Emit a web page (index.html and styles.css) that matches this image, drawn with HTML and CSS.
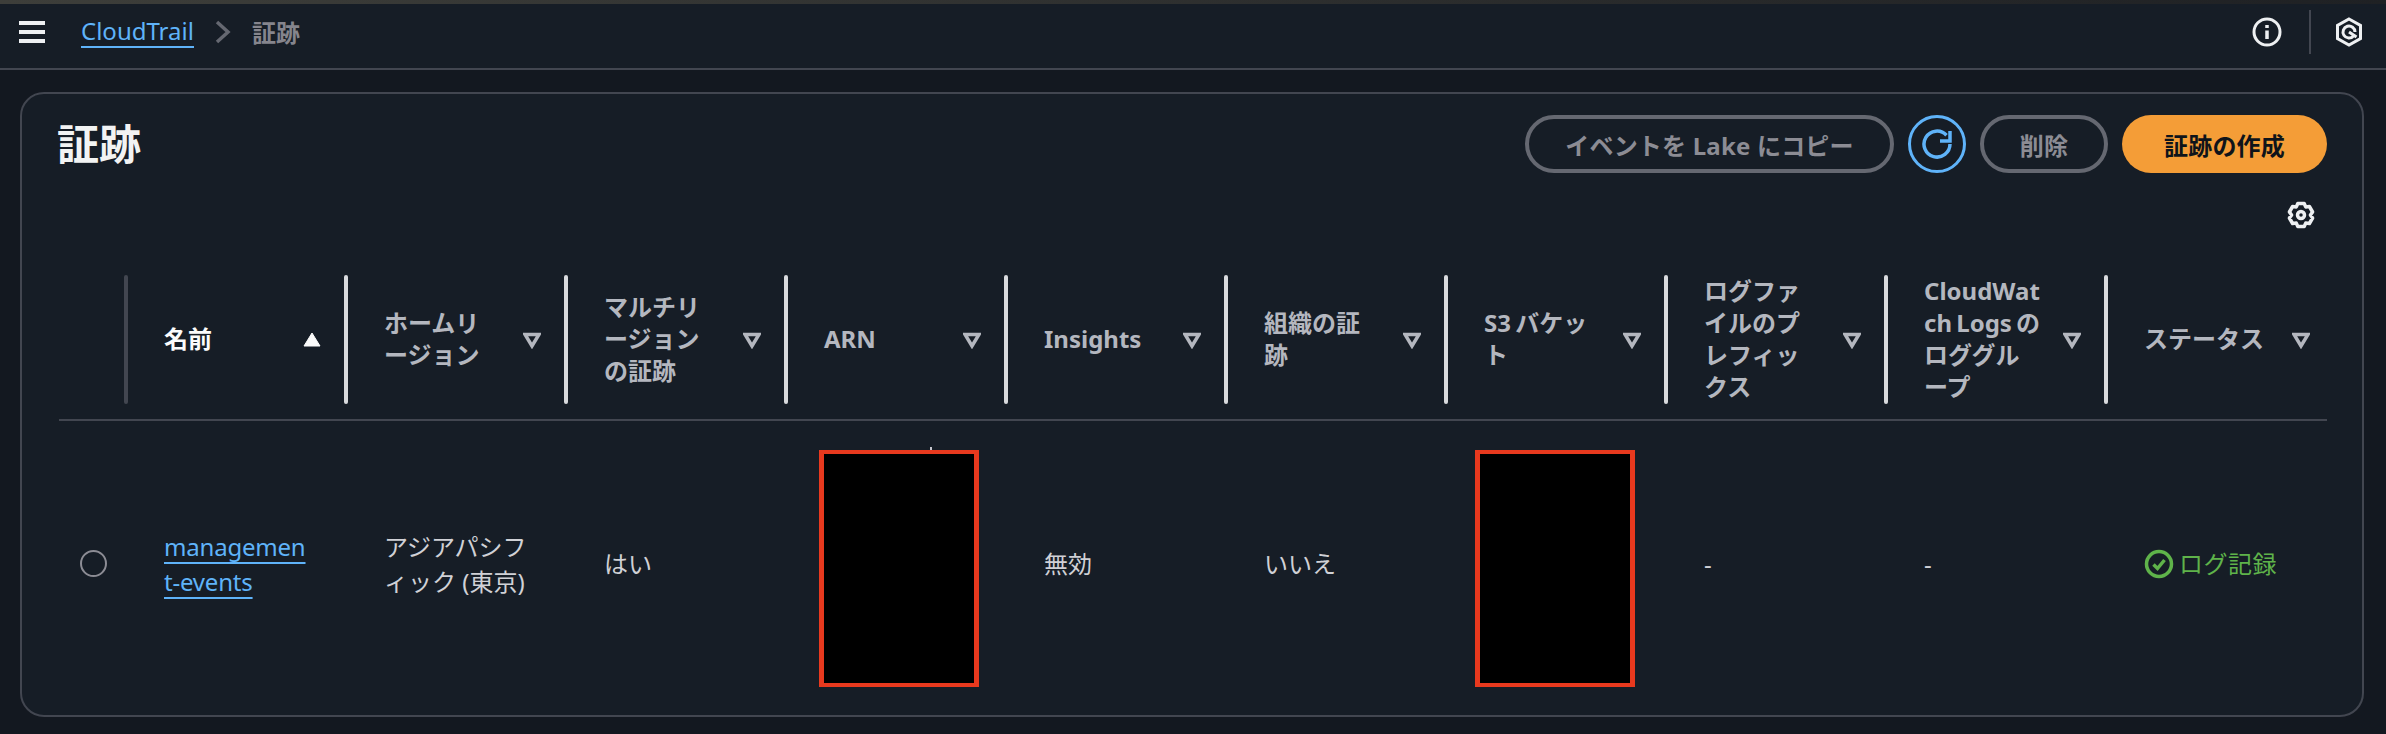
FILE: index.html
```html
<!DOCTYPE html>
<html lang="ja">
<head>
  <meta charset="UTF-8" />
  <title>証跡 | CloudTrail</title>
  <link rel="stylesheet" href="styles.css">
</head>
<body>

  <div class="window-edge"></div>

  <!-- Top navigation -->
  <nav class="topnav">
    <div class="menu-icon"><span></span><span></span><span></span></div>
    <a class="crumb-link" href="#">CloudTrail</a>
    <svg class="crumb-sep" viewBox="0 0 16 24"><path d="M2 2l11 10L2 22"/></svg>
    <span class="crumb-current">証跡</span>
    <div class="nav-tools">
      <svg class="nav-icon" viewBox="0 0 30 30">
        <circle cx="15" cy="15" r="13"/>
        <path class="thick" d="M15 13.500V22M15 8v3"/>
      </svg>
      <div class="nav-divider"></div>
      <svg class="nav-icon" viewBox="0 0 30 30">
        <path d="M15 2l11.500 6.500v13L15 28 3.500 21.500v-13z"/>
        <path d="M19.500 19a6 6 0 1 1 1.500-4M15 15l7.500 5"/>
      </svg>
    </div>
  </nav>

  <main class="content">
    <section class="card">

      <header class="card-head">
        <h1 class="card-title">証跡</h1>
        <div class="actions">
          <button class="btn btn-disabled btn-copy">イベントを Lake にコピー</button>
          <button class="btn-refresh">
            <svg viewBox="0 0 32 32">
              <path d="M19 13h10V3"/>
              <path d="M29 16a13 13 0 1 1-3.500-8.800"/>
            </svg>
          </button>
          <button class="btn btn-disabled btn-delete">削除</button>
          <button class="btn btn-primary">証跡の作成</button>
        </div>
      </header>

      <div class="prefs">
        <svg class="gear" viewBox="0 0 30 30">
          <path d="M11.800 3.500h6.400l1.500 3.400 3.700-.4 3.200 5.500-2.200 3 2.200 3-3.200 5.500-3.700-.4-1.500 3.400h-6.400l-1.500-3.400-3.700.4-3.200-5.500 2.200-3-2.200-3 3.200-5.500 3.700.4z"/>
          <circle cx="15" cy="15" r="3.500"/>
        </svg>
      </div>

      <div class="table">
        <!-- Header row -->
        <div class="th-empty"></div>
        <div class="th th-first th-sorted">
          <span class="th-label">名前</span>
          <svg class="caret" viewBox="0 0 18 18"><path class="caret-up" d="M9 2l8 13H1z"/></svg>
        </div>
        <div class="th">
          <span class="th-label">ホームリージョン</span>
          <svg class="caret" viewBox="0 0 18 18"><path d="M2 3.500h14L9 15z"/></svg>
        </div>
        <div class="th">
          <span class="th-label">マルチリージョンの証跡</span>
          <svg class="caret" viewBox="0 0 18 18"><path d="M2 3.500h14L9 15z"/></svg>
        </div>
        <div class="th">
          <span class="th-label">ARN</span>
          <svg class="caret" viewBox="0 0 18 18"><path d="M2 3.500h14L9 15z"/></svg>
        </div>
        <div class="th">
          <span class="th-label">Insights</span>
          <svg class="caret" viewBox="0 0 18 18"><path d="M2 3.500h14L9 15z"/></svg>
        </div>
        <div class="th">
          <span class="th-label">組織の証跡</span>
          <svg class="caret" viewBox="0 0 18 18"><path d="M2 3.500h14L9 15z"/></svg>
        </div>
        <div class="th">
          <span class="th-label">S3 バケット</span>
          <svg class="caret" viewBox="0 0 18 18"><path d="M2 3.500h14L9 15z"/></svg>
        </div>
        <div class="th">
          <span class="th-label">ログファイルのプレフィックス</span>
          <svg class="caret" viewBox="0 0 18 18"><path d="M2 3.500h14L9 15z"/></svg>
        </div>
        <div class="th">
          <span class="th-label">CloudWatch Logs のロググループ</span>
          <svg class="caret" viewBox="0 0 18 18"><path d="M2 3.500h14L9 15z"/></svg>
        </div>
        <div class="th th-last">
          <span class="th-label">ステータス</span>
          <svg class="caret" viewBox="0 0 18 18"><path d="M2 3.500h14L9 15z"/></svg>
        </div>

        <!-- Data row -->
        <div class="td td-radio"><span class="radio"></span></div>
        <div class="td"><a class="name-link" href="#">management-events</a></div>
        <div class="td"><span class="td-text">アジアパシフィック (東京)</span></div>
        <div class="td"><span class="td-text">はい</span></div>
        <div class="td td-arn"><div class="redacted"></div></div>
        <div class="td"><span class="td-text">無効</span></div>
        <div class="td"><span class="td-text">いいえ</span></div>
        <div class="td td-s3"><div class="redacted"></div></div>
        <div class="td"><span class="td-text">-</span></div>
        <div class="td"><span class="td-text">-</span></div>
        <div class="td">
          <span class="status">
            <svg class="status-icon" viewBox="0 0 30 30">
              <circle cx="15" cy="15" r="12.500"/>
              <path d="M9.500 15.500l4 4 7-8.500"/>
            </svg>
            ログ記録
          </span>
        </div>
      </div>

    </section>
  </main>

</body>
</html>
```

FILE: styles.css
```css
* {
  box-sizing: border-box;
}

body {
  margin: 0;
  height: 734px;
  overflow: hidden;
  background: #131820;
  color: #d0d1d6;
  font-family: "Noto Sans", "Noto Sans CJK JP", sans-serif;
  font-size: 24px;
}

.window-edge {
  height: 4px;
  background: linear-gradient(to right, #3d3e3a, #1f2124);
}

/* Top navigation */
.topnav {
  height: 66px;
  display: flex;
  align-items: center;
  padding: 0 22px 8px 19px;
  background: #161d26;
  border-bottom: 2px solid #424650;
}

.menu-icon {
  width: 26px;
  height: 22px;
  display: flex;
  flex-direction: column;
  justify-content: space-between;
  margin-right: 36px;
}

.menu-icon span {
  height: 4px;
  background: #eef0f2;
}

.crumb-link {
  color: #5fb3f9;
  font-size: 24px;
  text-decoration: none;
  border-bottom: 2px solid #5fb3f9;
  line-height: 30px;
}

.crumb-sep {
  width: 16px;
  height: 24px;
  margin: 0 21px;
  fill: none;
  stroke: #656871;
  stroke-width: 3.500;
}

.crumb-current {
  margin-bottom: 2px;
  color: #85858d;
  font-weight: 700;
}

.nav-tools {
  margin-left: auto;
  display: flex;
  align-items: center;
}

.nav-icon {
  width: 30px;
  height: 30px;
  fill: none;
  stroke: #eef0f2;
  stroke-width: 3;
}

.nav-icon .thick {
  stroke-width: 3.500;
}

.nav-divider {
  width: 2px;
  height: 44px;
  margin: 0 23px 0 27px;
  background: #424650;
}

/* Card */
.content {
  padding: 22px 22px 0 20px;
}

.card {
  height: 625px;
  padding: 0 35px 0 37px;
  background: #161d26;
  border: 2px solid #424650;
  border-radius: 24px;
}

.card-head {
  display: flex;
  justify-content: space-between;
  padding-top: 21px;
}

.card-title {
  margin: 0 0 0 -2px;
  color: #f2f3f3;
  font-size: 42px;
  font-weight: 700;
  line-height: 58px;
}

.actions {
  display: flex;
  align-items: center;
  gap: 14px;
}

.btn {
  height: 58px;
  padding: 0;
  border-radius: 29px;
  font-family: inherit;
  font-size: 24px;
  font-weight: 700;
  letter-spacing: 0.2px;
}

.btn-disabled {
  background: transparent;
  border: 4px solid #656871;
  color: #8c8c94;
}

.btn-copy {
  width: 369px;
}

.btn-delete {
  width: 128px;
}

.btn-primary {
  width: 205px;
  background: #f49d37;
  border: none;
  color: #0f141a;
}

.btn-refresh {
  width: 58px;
  height: 58px;
  padding: 0;
  display: flex;
  align-items: center;
  justify-content: center;
  background: transparent;
  border: 3px solid #5fb3f9;
  border-radius: 50%;
}

.btn-refresh svg {
  width: 32px;
  height: 32px;
  fill: none;
  stroke: #5fb3f9;
  stroke-width: 3.500;
}

.prefs {
  display: flex;
  justify-content: flex-end;
  padding: 27px 11px 0 0;
}

.gear {
  width: 30px;
  height: 30px;
  fill: none;
  stroke: #eef0f2;
  stroke-width: 3.500;
  stroke-linejoin: round;
}

/* Table */
.table {
  display: grid;
  grid-template-columns: 65px repeat(9, 220px) 223px;
  margin-top: 45px;
}

.th-empty,
.th {
  height: 146px;
  border-bottom: 2px solid #424650;
}

.th {
  position: relative;
  display: flex;
  align-items: flex-start;
  justify-content: space-between;
  padding: 0 23px 0 40px;
}

.th::before {
  content: "";
  position: absolute;
  left: 0;
  top: 0;
  width: 4px;
  height: 129px;
  background: #d8dadd;
  border-radius: 2px;
}

.th-first::before {
  background: #424650;
}

.th-last {
  padding-right: 17px;
}

.th-label {
  width: 119px;
  height: 127px;
  display: flex;
  align-items: center;
  color: #b4b7bf;
  font-weight: 700;
  line-height: 32px;
  line-break: anywhere;
  overflow-wrap: anywhere;
  word-spacing: -2px;
}

.th-last .th-label {
  width: 130px;
}

.th-sorted .th-label {
  color: #fbfbfb;
}

.caret {
  flex: none;
  width: 18px;
  height: 18px;
  margin-top: 56px;
  fill: none;
  stroke: #b4b7bf;
  stroke-width: 3.500;
}

.caret .caret-up {
  fill: #fbfbfb;
  stroke: #fbfbfb;
  stroke-width: 1;
}

.td {
  height: 285px;
  display: flex;
  align-items: center;
  padding-left: 40px;
  line-height: 35px;
}

.td-radio {
  padding-left: 21px;
}

.radio {
  width: 27px;
  height: 27px;
  border: 2px solid #8c8c94;
  border-radius: 50%;
}

.name-link {
  width: 146px;
  color: #5fb3f9;
  letter-spacing: -0.2px;
  overflow-wrap: anywhere;
  text-decoration: underline;
  text-decoration-thickness: 2px;
  text-underline-offset: 6px;
}

.td-text {
  width: 146px;
  line-break: anywhere;
}

.td-arn {
  padding-left: 35px;
}

.td-s3 {
  padding-left: 31px;
}

.redacted {
  position: relative;
  width: 160px;
  height: 237px;
  margin-top: 9px;
  background: #000;
  border-style: solid;
  border-color: #e8391e;
  border-width: 4px 5px;
}

/* stray pixel of the text that sticks out above the black box */
.redacted::before {
  content: "";
  position: absolute;
  display: none;
  left: 106px;
  top: -7px;
  width: 2px;
  height: 3px;
  background: #c6c6cd;
}

.td-arn .redacted::before {
  display: block;
}

.status {
  display: flex;
  align-items: center;
  gap: 5px;
  color: #5fb34a;
  letter-spacing: 0.5px;
}

.status-icon {
  width: 30px;
  height: 30px;
  fill: none;
  stroke: #5fb34a;
  stroke-width: 3.500;
}
```
